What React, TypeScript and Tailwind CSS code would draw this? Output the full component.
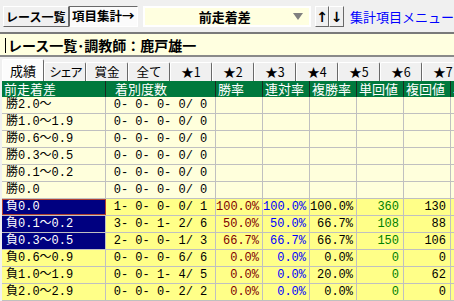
import React from 'react';

type Row = {
    label: string;
    counts: string;
    win?: string;
    rentai?: string;
    fukusho?: string;
    tan?: string;
    fuku?: string;
    lose?: boolean;
    selected?: boolean;
    focused?: boolean;
};

const rows: Row[] = [
    { label: '勝2.0〜', counts: '0- 0- 0- 0/ 0' },
    { label: '勝1.0〜1.9', counts: '0- 0- 0- 0/ 0' },
    { label: '勝0.6〜0.9', counts: '0- 0- 0- 0/ 0' },
    { label: '勝0.3〜0.5', counts: '0- 0- 0- 0/ 0' },
    { label: '勝0.1〜0.2', counts: '0- 0- 0- 0/ 0' },
    { label: '勝0.0', counts: '0- 0- 0- 0/ 0' },
    { label: '負0.0', counts: '1- 0- 0- 0/ 1', win: '100.0%', rentai: '100.0%', fukusho: '100.0%', tan: '360', fuku: '130', lose: true, selected: true, focused: true },
    { label: '負0.1〜0.2', counts: '3- 0- 1- 2/ 6', win: '50.0%', rentai: '50.0%', fukusho: '66.7%', tan: '108', fuku: '88', lose: true, selected: true },
    { label: '負0.3〜0.5', counts: '2- 0- 0- 1/ 3', win: '66.7%', rentai: '66.7%', fukusho: '66.7%', tan: '150', fuku: '106', lose: true, selected: true },
    { label: '負0.6〜0.9', counts: '0- 0- 0- 6/ 6', win: '0.0%', rentai: '0.0%', fukusho: '0.0%', tan: '0', fuku: '0', lose: true },
    { label: '負1.0〜1.9', counts: '0- 0- 1- 4/ 5', win: '0.0%', rentai: '0.0%', fukusho: '20.0%', tan: '0', fuku: '62', lose: true },
    { label: '負2.0〜2.9', counts: '0- 0- 0- 2/ 2', win: '0.0%', rentai: '0.0%', fukusho: '0.0%', tan: '0', fuku: '0', lose: true },
];

const tabs = ['成績', 'シェア', '賞金', '全て', '★1', '★2', '★3', '★4', '★5', '★6', '★7'];
const headers = ['勝率', '連対率', '複勝率', '単回値', '複回値'];

const App: React.FC = () => {
    return (
        <div className="w-[454px] h-[301px] overflow-hidden bg-[#f0f0f0] font-['Liberation_Mono','Noto_Sans_CJK_JP',monospace] text-black">
            {/* ツールバー */}
            <div className="flex items-start h-[32px] pt-[6px] pl-[3px]">
                <div className="w-[73px] h-[21px] flex items-center justify-center bg-[#f0f0f0] border border-t-white border-l-white border-b-[#696969] border-r-[#696969] font-['Noto_Sans_CJK_JP',sans-serif] font-bold text-[12px] leading-none whitespace-nowrap">
                    レース一覧
                </div>
                <div className="w-[77px] h-[21px] flex items-center justify-center bg-[#fbfbfb] border border-t-[#696969] border-l-[#696969] border-b-white border-r-white font-['Noto_Sans_CJK_JP',sans-serif] font-bold text-[12.5px] leading-none whitespace-nowrap">
                    項目集計→
                </div>
                <div className="relative ml-[5px] w-[187px] h-[21px] bg-[#ffffe0] border-2 border-white flex items-center justify-center font-['Noto_Sans_CJK_JP',sans-serif] font-bold text-[13px] leading-none">
                    <span className="mr-[4px]">前走着差</span>
                    <span className="absolute right-[6px] top-[5px] w-0 h-0 border-l-[5px] border-r-[5px] border-t-[7px] border-l-transparent border-r-transparent border-t-[#808080]" />
                </div>
                <div className="ml-[4px] w-[16px] h-[21px] flex items-center justify-center bg-[#f0f0f0] border border-t-white border-l-white border-b-[#696969] border-r-[#696969] font-['DejaVu_Sans',sans-serif] font-bold text-[14px] leading-none">
                    ↑
                </div>
                <div className="w-[16px] h-[21px] flex items-center justify-center bg-[#f0f0f0] border border-t-white border-l-white border-b-[#696969] border-r-[#696969] font-['DejaVu_Sans',sans-serif] font-bold text-[14px] leading-none">
                    ↓
                </div>
                <div className="ml-[6px] h-[21px] flex items-center whitespace-nowrap text-[#0000ff] font-['Noto_Sans_CJK_JP',sans-serif] text-[13px] leading-none">
                    集計項目メニュー
                </div>
            </div>

            {/* タイトル */}
            <div className="relative h-[25px] bg-[#ffffe0] border-t-2 border-b-2 border-t-[#7a7a7a] border-b-[#8a8a8a] flex items-center pl-[8px] font-['Noto_Sans_CJK_JP',sans-serif] font-bold text-[14px] leading-none whitespace-nowrap">
                <span className="absolute left-[5px] top-[4px] w-[1px] h-[15px] bg-black" />
                レース一覧･調教師：鹿戸雄一
            </div>

            {/* タブ */}
            <div className="flex items-end h-[24px] pl-[2px] overflow-hidden">
                {tabs.map((t, i) => (
                    <div
                        key={t}
                        className={`shrink-0 w-[42px] flex items-center justify-center whitespace-nowrap font-['Noto_Sans_CJK_JP',sans-serif] leading-none border-t border-l border-r rounded-t-[2px] border-t-white border-l-white border-r-[#696969] ${
                            i === 0 ? 'h-[22px] bg-[#fcfcfc] text-[13px]' : 'h-[19px] bg-[#f0f0f0] text-[12.5px]'
                        } ${t === 'シェア' ? 'tracking-[-2px]' : ''}`}
                    >
                        {t}
                    </div>
                ))}
            </div>

            {/* 表 */}
            <div className="pl-[2px] w-[520px]">
                <div className="flex h-[16px] bg-[#00793d] text-white font-['Noto_Sans_CJK_JP',sans-serif] text-[13px] leading-[16px] whitespace-nowrap">
                    <div className="w-[104px] shrink-0 border-r border-r-[#1a2a20] pl-[2px]">前走着差</div>
                    <div className="w-[110px] shrink-0 border-r border-r-[#1a2a20] pl-[9px]">着別度数</div>
                    {headers.map(h => (
                        <div key={h} className="w-[47px] shrink-0 border-r border-r-[#1a2a20] pl-[2px]">
                            {h}
                        </div>
                    ))}
                    <div className="w-[50px] shrink-0 pl-[2px]">単回値</div>
                </div>

                {rows.map(r => {
                    const bg = r.lose ? 'bg-[#ffff88]' : 'bg-[#ffffdc]';
                    return (
                        <div key={r.label} className={`flex h-[17px] border-b border-b-[#c0c0c0] text-[12px] leading-[16px] whitespace-nowrap ${bg}`}>
                            <div
                                className={`w-[104px] shrink-0 border-r border-r-[#c0c0c0] pl-[4px] ${
                                    r.selected ? 'bg-[#000080] text-white' : ''
                                } ${r.focused ? 'outline outline-1 -outline-offset-1 outline-[#b04030]' : ''}`}
                            >
                                {r.label}
                            </div>
                            <div className="w-[110px] shrink-0 border-r border-r-[#c0c0c0] text-center whitespace-pre">
                                {r.counts}
                            </div>
                            <div className="w-[47px] shrink-0 border-r border-r-[#c0c0c0] text-right pr-[3px] text-[#800000]">{r.win}</div>
                            <div className="w-[47px] shrink-0 border-r border-r-[#c0c0c0] text-right pr-[3px] text-[#0000ff]">{r.rentai}</div>
                            <div className="w-[47px] shrink-0 border-r border-r-[#c0c0c0] text-right pr-[3px]">{r.fukusho}</div>
                            <div className="w-[47px] shrink-0 border-r border-r-[#c0c0c0] text-right pr-[4px] text-[#008000]">{r.tan}</div>
                            <div className="w-[47px] shrink-0 border-r border-r-[#c0c0c0] text-right pr-[4px]">{r.fuku}</div>
                            <div className="w-[50px] shrink-0" />
                        </div>
                    );
                })}
            </div>
        </div>
    );
};

export default App;
